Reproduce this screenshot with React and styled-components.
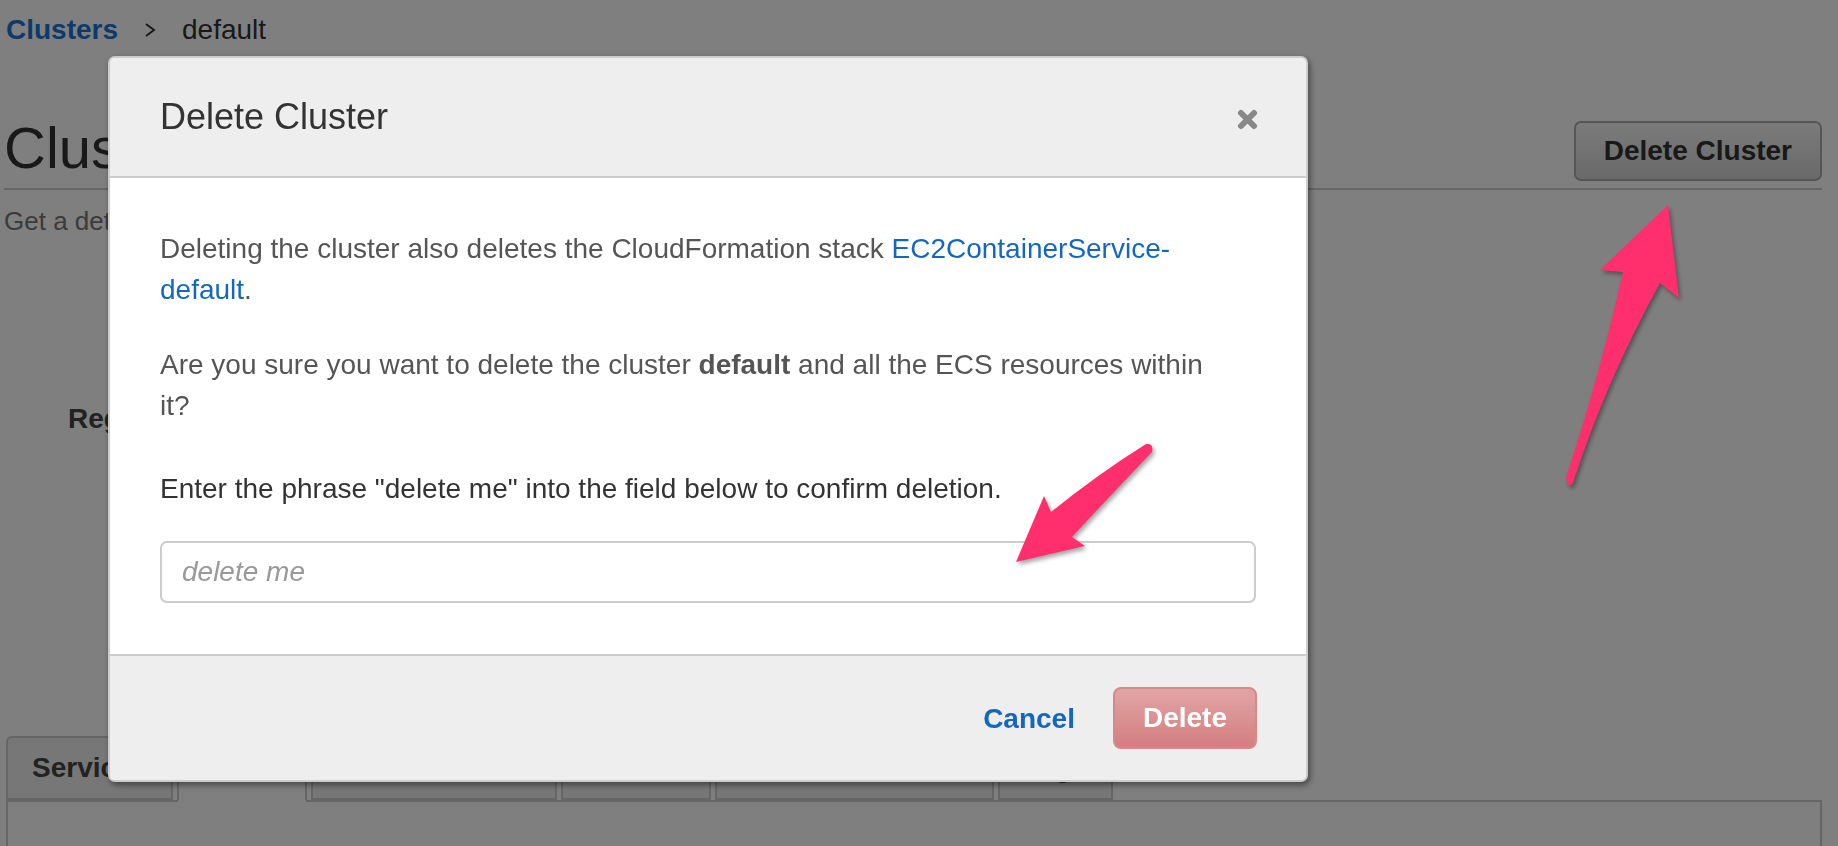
import React from "react";
import styled, { createGlobalStyle } from "styled-components";

const GlobalStyle = createGlobalStyle`
  html, body {
    margin: 0;
    padding: 0;
    background: #ffffff;
    overflow: hidden;
  }
  body {
    font-family: "Liberation Sans", Arial, Helvetica, sans-serif;
  }
  * { box-sizing: border-box; }
`;

/* ---------- background page ---------- */

const Page = styled.div`
  height: 846px;
  padding: 10px 16px 0 4px;
  overflow: hidden;
  color: #333;
`;

const Breadcrumb = styled.nav`
  display: flex;
  align-items: center;
  gap: 26px;
  padding-left: 2px;
  font-size: 28px;
  line-height: 40px;
`;

const CrumbLink = styled.a`
  color: #1b74d6;
  font-weight: bold;
  text-decoration: none;
`;

const CrumbCurrent = styled.span`
  color: #333;
`;

const Chevron = styled.svg`
  width: 12px;
  height: 16px;
  display: block;
`;

const TitleRow = styled.div`
  margin-top: 65px;
  display: flex;
  justify-content: space-between;
  align-items: flex-end;
  padding-bottom: 7px;
  border-bottom: 2px solid #cccccc;
`;

const PageTitle = styled.h1`
  margin: 0;
  font-size: 58px;
  line-height: 66px;
  font-weight: normal;
  color: #333;
`;

const PageButton = styled.button`
  height: 60px;
  padding: 0 28px;
  border: 2px solid #aaaaaa;
  border-radius: 7px;
  background: linear-gradient(#f6f6f6, #d4d4d4);
  font-family: inherit;
  font-size: 28px;
  font-weight: bold;
  color: #333;
`;

const Subtitle = styled.p`
  margin: 11px 0 0;
  font-size: 26px;
  line-height: 40px;
  color: #777;
`;

const Details = styled.dl`
  margin: 158px 0 0;
  padding-left: 64px;
  display: grid;
  grid-template-columns: auto 1fr;
  column-gap: 40px;
  font-size: 28px;
  line-height: 40px;
`;

const DetailLabel = styled.dt`
  font-weight: bold;
  color: #444;
`;

const DetailValue = styled.dd`
  margin: 0;
  color: #555;
`;

const TabList = styled.div`
  margin: 297px 0 0 2px;
  display: flex;
  gap: 4px;
  position: relative;
`;

const Tab = styled.div`
  padding: 0 24px;
  border: 2px solid #cccccc;
  border-radius: 6px 6px 0 0;
  background: ${(p) => (p.$active ? "#ffffff" : "#eeeeee")};
  border-bottom-color: ${(p) => (p.$active ? "#ffffff" : "#cccccc")};
  margin-bottom: ${(p) => (p.$active ? "-2px" : "0")};
  height: ${(p) => (p.$active ? "66px" : "64px")};
  font-size: 28px;
  font-weight: bold;
  line-height: 60px;
  color: #444;
  white-space: nowrap;
`;

const TabPanel = styled.div`
  margin-left: 2px;
  height: 220px;
  border: 2px solid #cccccc;
  background: #fff;
`;

/* ---------- modal ---------- */

const Overlay = styled.div`
  position: fixed;
  inset: 0;
  z-index: 10;
  background: rgba(0, 0, 0, 0.5);
  padding: 56px 0 0 108px;
`;

const Modal = styled.div`
  width: 1200px;
  background: #ffffff;
  border: 2px solid #cccccc;
  border-radius: 7px;
  box-shadow: 2px 3px 6px rgba(0, 0, 0, 0.45);
  overflow: hidden;
`;

const ModalHeader = styled.div`
  height: 120px;
  display: flex;
  align-items: center;
  justify-content: space-between;
  padding: 0 48px 0 50px;
  background: #eeeeee;
  border-bottom: 2px solid #cccccc;
`;

const ModalTitle = styled.h2`
  margin: 0;
  font-size: 36px;
  font-weight: normal;
  color: #333;
`;

const CloseButton = styled.button`
  padding: 0;
  margin-top: 4px;
  border: none;
  background: none;
  width: 21px;
  height: 21px;
  display: flex;
`;

const ModalBody = styled.div`
  padding: 50px 50px 51px;
  font-size: 28px;
  line-height: 41px;
  color: #555;
`;

const Paragraph = styled.p`
  margin: 0 30px ${(p) => p.$gap}px 0;
`;

const Link = styled.a`
  color: #1467bf;
  text-decoration: none;
`;

const Strong = styled.strong`
  font-weight: bold;
  color: #555;
`;

const Label = styled.label`
  display: block;
  margin-bottom: 32px;
  color: #333;
`;

const ConfirmInput = styled.input`
  display: block;
  width: 100%;
  height: 62px;
  padding: 0 20px;
  border: 2px solid #cccccc;
  border-radius: 7px;
  font-family: inherit;
  font-size: 28px;
  color: #333;
  outline: none;
  &::placeholder {
    color: #999;
    font-style: italic;
  }
`;

const ModalFooter = styled.div`
  display: flex;
  justify-content: flex-end;
  align-items: center;
  gap: 38px;
  padding: 31px 49px 31px 0;
  background: #eeeeee;
  border-top: 2px solid #cccccc;
`;

const CancelButton = styled.button`
  padding: 2px 0 0;
  border: none;
  background: none;
  font-family: inherit;
  font-size: 28px;
  font-weight: bold;
  color: #1467bf;
`;

const DangerButton = styled.button`
  height: 62px;
  padding: 0 28px;
  border: 2px solid #d5898a;
  border-radius: 8px;
  background: linear-gradient(#e1a5a5, #d47e7f);
  font-family: inherit;
  font-size: 28px;
  font-weight: bold;
  color: #ffffff;
`;

/* ---------- annotation layer ---------- */

const Annotations = styled.svg`
  position: fixed;
  top: 0;
  left: 0;
  z-index: 20;
  width: 1838px;
  height: 846px;
  pointer-events: none;
  filter: drop-shadow(2px 3px 2px rgba(0, 0, 0, 0.35));
`;

const tabs = ["Services", "Tasks", "ECS Instances", "Metrics", "Scheduled Tasks", "Tags"];

export default function App() {
  return (
    <>
      <GlobalStyle />
      <Page>
        <Breadcrumb>
          <CrumbLink href="#">Clusters</CrumbLink>
          <Chevron viewBox="0 0 12 16">
            <polyline points="2,2 10,8 2,14" fill="none" stroke="#333" strokeWidth="2" />
          </Chevron>
          <CrumbCurrent>default</CrumbCurrent>
        </Breadcrumb>
        <TitleRow>
          <PageTitle>Cluster : default</PageTitle>
          <PageButton>Delete Cluster</PageButton>
        </TitleRow>
        <Subtitle>Get a detailed view of the resources on your cluster.</Subtitle>
        <Details>
          <DetailLabel>Registered container instances</DetailLabel>
          <DetailValue>0</DetailValue>
        </Details>
        <TabList>
          {tabs.map((t) => (
            <Tab key={t} $active={t === "Tasks"}>
              {t}
            </Tab>
          ))}
        </TabList>
        <TabPanel />
      </Page>

      <Overlay>
        <Modal>
          <ModalHeader>
            <ModalTitle>Delete Cluster</ModalTitle>
            <CloseButton aria-label="Close">
              <svg width="21" height="21" viewBox="0 0 21 21">
                <path
                  d="M4 4 L17 17 M17 4 L4 17"
                  stroke="#888888"
                  strokeWidth="6"
                  strokeLinecap="round"
                  fill="none"
                />
              </svg>
            </CloseButton>
          </ModalHeader>
          <ModalBody>
            <Paragraph $gap={34}>
              Deleting the cluster also deletes the CloudFormation stack{" "}
              <Link href="#">EC2ContainerService-default</Link>.
            </Paragraph>
            <Paragraph $gap={42}>
              Are you sure you want to delete the cluster <Strong>default</Strong> and all the ECS
              resources within it?
            </Paragraph>
            <Label htmlFor="confirm">
              Enter the phrase "delete me" into the field below to confirm deletion.
            </Label>
            <ConfirmInput id="confirm" placeholder="delete me" />
          </ModalBody>
          <ModalFooter>
            <CancelButton>Cancel</CancelButton>
            <DangerButton>Delete</DangerButton>
          </ModalFooter>
        </Modal>
      </Overlay>

      <Annotations viewBox="0 0 1838 846">
        <path
          d="M1566 478 Q1600 375 1623 272 L1600 270 L1668 205 L1679 298 L1660 283 Q1605 383 1573 483 Q1568 490 1566 478 Z"
          fill="#ff2f6d"
        />
        <path
          d="M1146 444 Q1098 474 1051 512 L1044 496 L1016 562 L1085 546 L1072 537 Q1110 496 1152 452 Q1154 443 1146 444 Z"
          fill="#ff2f6d"
        />
      </Annotations>
    </>
  );
}
